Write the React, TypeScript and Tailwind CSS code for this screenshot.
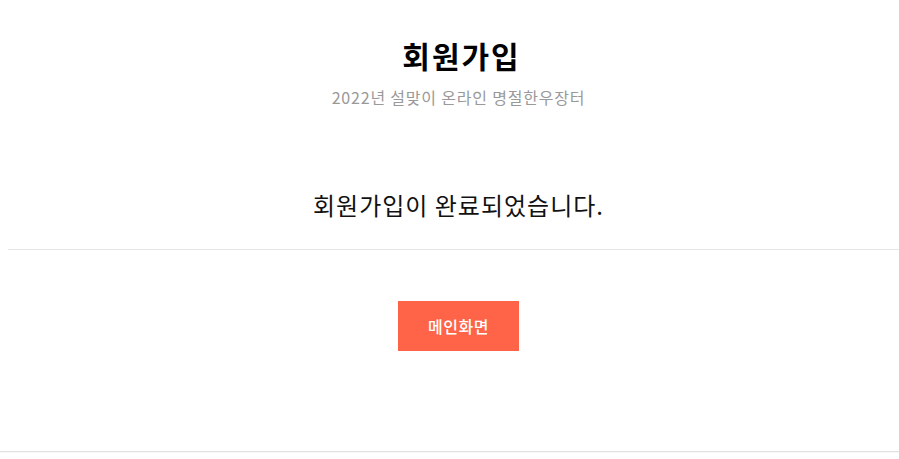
export default function App() {
  return (
    <div
      className="min-h-screen bg-white text-black"
      style={{ fontFamily: '"Noto Sans CJK KR", "Noto Sans", sans-serif' }}
    >
      <div className="flex flex-col items-center pt-[35px] pl-[18px]">
        <h1 className="text-[30px] leading-[40px] font-bold tracking-[2px] pl-[6px]">회원가입</h1>
        <p className="mt-[10px] text-[16px] leading-[24px] text-[#999999] tracking-[0.8px]">
          2022년 설맞이 온라인 명절한우장터
        </p>

        <p className="mt-[78px] text-[24px] leading-[36px] text-[#111111] tracking-[1px]">
          회원가입이 완료되었습니다.
        </p>
      </div>

      <div className="ml-[8px] mt-[26px] border-t border-[#e5e5e5]" />

      <div className="flex justify-center pt-[51px] pl-[18px]">
        <button className="w-[121px] h-[50px] bg-[#ff6448] text-white text-[16px] font-medium tracking-[0.5px]">
          메인화면
        </button>
      </div>

      <div className="mt-[100px] border-t border-[#e3e3e3]" />
      <div className="border-t border-[#f7f7f7]" />
    </div>
  );
}
